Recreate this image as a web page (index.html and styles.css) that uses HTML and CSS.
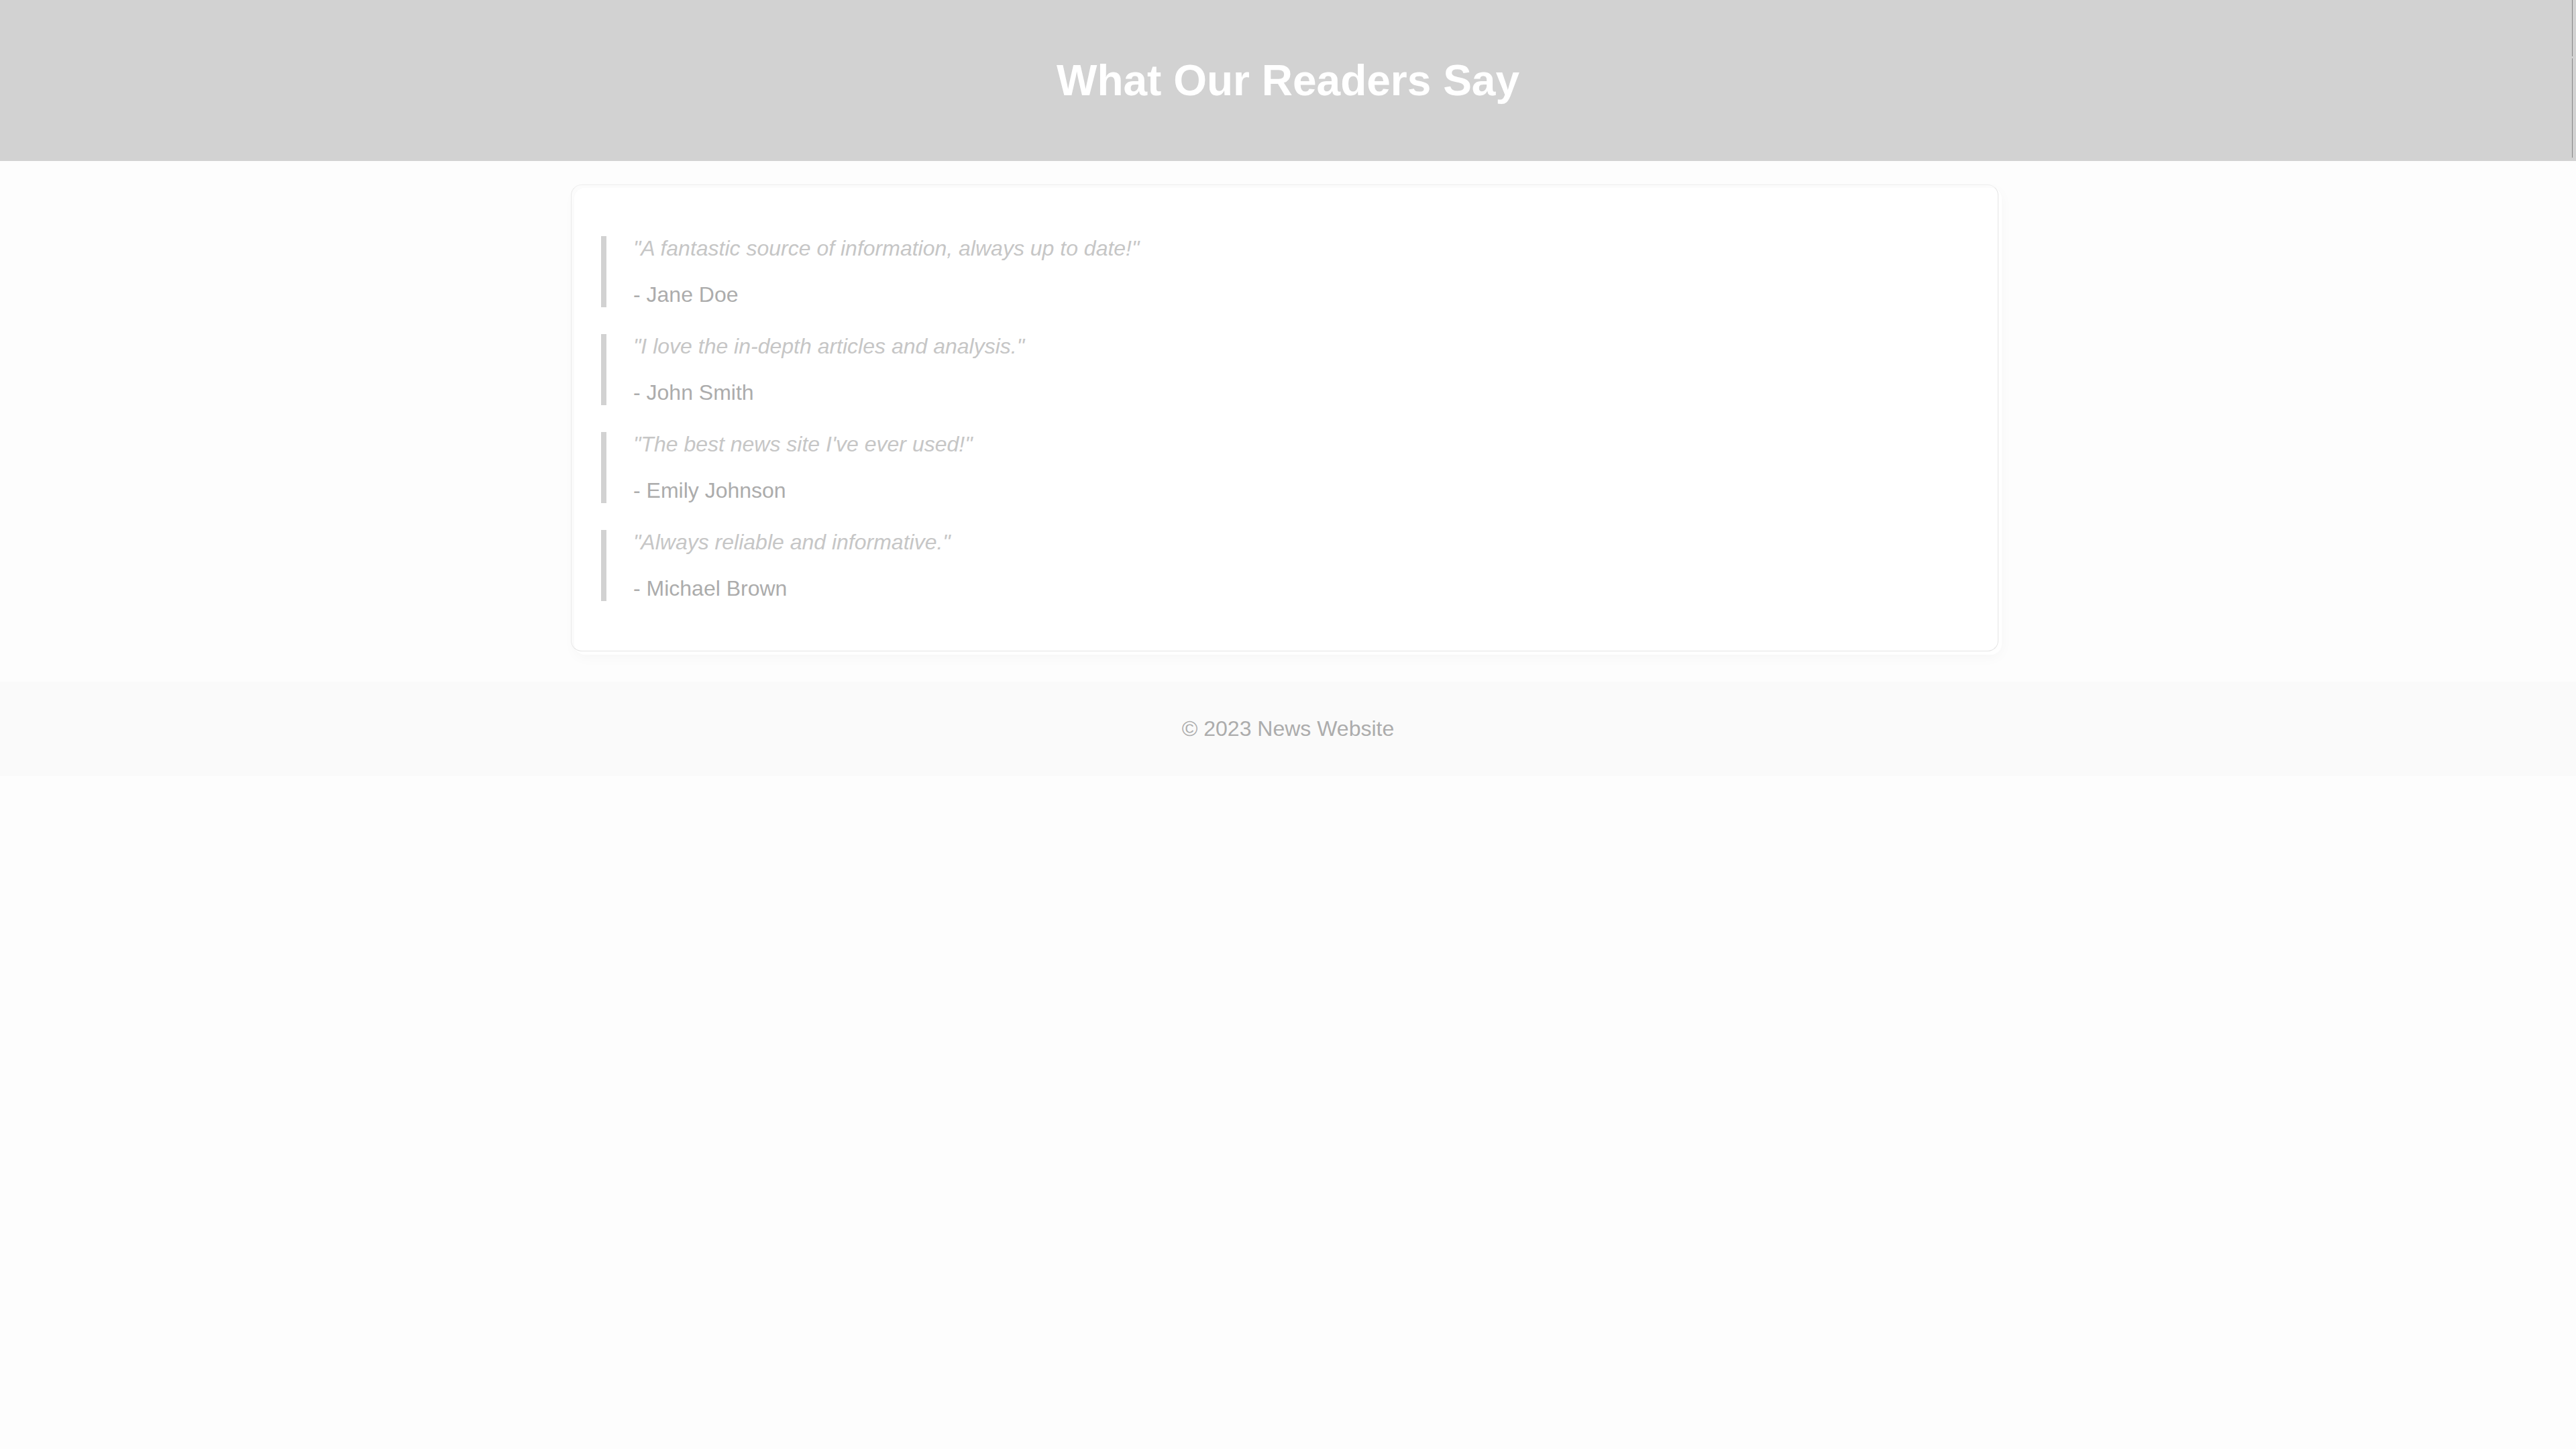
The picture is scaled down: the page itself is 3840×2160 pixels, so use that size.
FILE: index.html
```html
<!DOCTYPE html>
<html lang="en">
<head>
<meta charset="utf-8">
<meta name="viewport" content="width=device-width, initial-scale=1">
<title>What Our Readers Say</title>
<link rel="stylesheet" href="styles.css">
</head>
<body>
<header class="site-header">
  <h1 class="site-title">What Our Readers Say</h1>
</header>
<main class="testimonials">
  <ul class="quote-list">
    <li class="quote">
      <p class="quote-text">"A fantastic source of information, always up to date!"</p>
      <p class="quote-author">- Jane Doe</p>
    </li>
    <li class="quote">
      <p class="quote-text">"I love the in-depth articles and analysis."</p>
      <p class="quote-author">- John Smith</p>
    </li>
    <li class="quote">
      <p class="quote-text">"The best news site I've ever used!"</p>
      <p class="quote-author">- Emily Johnson</p>
    </li>
    <li class="quote">
      <p class="quote-text">"Always reliable and informative."</p>
      <p class="quote-author">- Michael Brown</p>
    </li>
  </ul>
</main>
<footer class="site-footer">
  <p class="copyright">© 2023 News Website</p>
</footer>
</body>
</html>
```
FILE: styles.css
```css
* {
  box-sizing: border-box;
}

body {
  margin: 0;
  background: #fdfdfd;
  color: #acacac;
  font-family: "Liberation Sans", Arial, sans-serif;
  font-size: 32px;
  line-height: 37px;
}

h1,
p,
ul {
  margin: 0;
  padding: 0;
}

.site-header {
  position: relative;
  padding: 83px 40px;
  background: #d2d2d2;
  text-align: center;
}

/* Thin rule down the right edge, with a short break in it */
.site-header::after {
  content: "";
  position: absolute;
  top: 0;
  right: 5px;
  bottom: 5px;
  width: 1px;
  background: linear-gradient(#868686 84px, transparent 84px, transparent 87px, #868686 87px);
}

.site-title {
  color: #fff;
  font-size: 64px;
  line-height: 74px;
}

.testimonials {
  position: relative;
  width: calc(100% - 80px);
  max-width: 2128px;
  margin: 40px auto;
  padding: 72px 40px 80px;
  border-radius: 16px;
  background: #fff;
  box-shadow: 0 4px 20px rgba(0, 0, 0, 0.03);
}

/* Hairline frame shifted up and left of the card */
.testimonials::before {
  content: "";
  position: absolute;
  inset: -5px 5px 5px -5px;
  border: 1px solid #e4e4e4;
  border-top-color: #eee;
  border-left-color: #e9e9e9;
  border-radius: 16px;
  pointer-events: none;
}

.quote-list {
  display: flex;
  flex-direction: column;
  gap: 40px;
  list-style: none;
}

.quote {
  display: flex;
  flex-direction: column;
  gap: 32px;
  padding-left: 40px;
  border-left: 8px solid #d2d2d2;
}

.quote-text {
  color: #c6c6c6;
  font-style: italic;
}

.site-footer {
  padding: 52px 40px;
  background: #fafafa;
  text-align: center;
}
```
